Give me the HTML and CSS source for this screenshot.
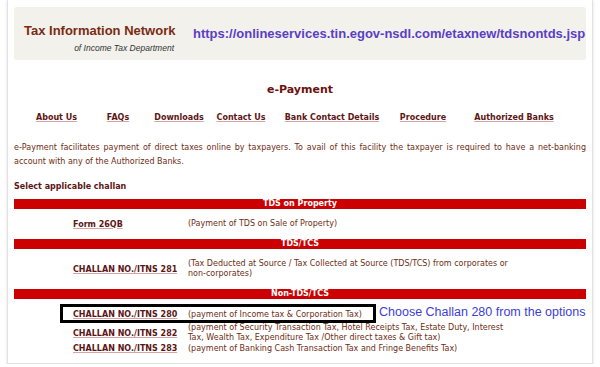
FILE: index.html
```html
<!DOCTYPE html>
<html>
    <head>
        <title>e-Payment</title>
        <meta name="viewport" content="width=device-width, initial-scale=1.0">
        <link rel="stylesheet" href="styles.css">
    </head>
<body>
    <div class='page'>
        <div class='header'>
            <div class='brand'>
                <div class='brand-title'>Tax Information Network</div>
                <div class='brand-sub'>of Income Tax Department</div>
            </div>
            <div class='url'>https://onlineservices.tin.egov-nsdl.com/etaxnew/tdsnontds.jsp</div>
        </div>

        <h1 class='title'>e-Payment</h1>

        <div class='nav'>
            <a href='#'>About Us</a>
            <a href='#'>FAQs</a>
            <a href='#'>Downloads</a>
            <a href='#'>Contact Us</a>
            <a href='#'>Bank Contact Details</a>
            <a href='#'>Procedure</a>
            <a href='#'>Authorized Banks</a>
        </div>

        <p class='intro'>e-Payment facilitates payment of direct taxes online by taxpayers. To avail of this facility the taxpayer is required to have a net-banking account with any of the Authorized Banks.</p>

        <div class='select-label'>Select applicable challan</div>

        <div class='bar first-bar'>TDS on Property</div>
        <div class='challan-row row-single'>
            <a href='#'>Form 26QB</a>
            <span>(Payment of TDS on Sale of Property)</span>
        </div>

        <div class='bar'>TDS/TCS</div>
        <div class='challan-row row-tall'>
            <a href='#'>CHALLAN NO./ITNS 281</a>
            <span>(Tax Deducted at Source / Tax Collected at Source (TDS/TCS) from corporates or non-corporates)</span>
        </div>

        <div class='bar'>Non-TDS/TCS</div>
        <div class='non-tds'>
            <div class='challan-row row-tight'>
                <a href='#'>CHALLAN NO./ITNS 280</a>
                <span>(payment of Income tax &amp; Corporation Tax)</span>
            </div>
            <div class='challan-row row-tight'>
                <a href='#'>CHALLAN NO./ITNS 282</a>
                <span>(payment of Security Transaction Tax, Hotel Receipts Tax, Estate Duty, Interest Tax, Wealth Tax, Expenditure Tax /Other direct taxes &amp; Gift tax)</span>
            </div>
            <div class='challan-row row-tight'>
                <a href='#'>CHALLAN NO./ITNS 283</a>
                <span>(payment of Banking Cash Transaction Tax and Fringe Benefits Tax)</span>
            </div>
            <div class='highlight'></div>
            <div class='hint'>Choose Challan 280 from the options</div>
        </div>
    </div>
</body>
</html>
```

FILE: styles.css
```css
html {
    font-family: 'DejaVu Sans', Verdana, sans-serif;
}
body {
    margin: 0;
    background: #ffffff;
}
a {
    color: #5c1616;
    font-weight: bold;
    text-decoration: underline;
    text-decoration-color: #d9a3a3;
    text-decoration-thickness: 1px;
    text-underline-offset: 1px;
}
.page {
    margin-left: 7px;
    width: 572px;
    height: 356px;
    padding: 7px 6px 0 6px;
    border: 1px solid #e2e2e2;
    border-top: 0;
    box-shadow: 0 1px 3px rgba(0,0,0,0.12);
    color: #6e2d14;
    font-size: 8px;
}
.header {
    display: flex;
    align-items: center;
    height: 53px;
    background: #f2f1eb;
    border-radius: 3px;
}
.brand {
    flex-shrink: 0;
    width: 160px;
    padding-left: 10px;
    padding-top: 8px;
    font-family: 'Liberation Sans', Arial, sans-serif;
    white-space: nowrap;
}
.brand-title {
    color: #7a2b12;
    font-weight: bold;
    font-size: 13px;
    line-height: 16px;
}
.brand-sub {
    color: #333;
    font-style: italic;
    font-size: 8.5px;
    text-align: right;
    padding-right: 10px;
    margin-top: 4px;
}
.url {
    margin-left: 9px;
    color: #5a3ec8;
    font-family: 'Liberation Sans', Arial, sans-serif;
    font-weight: bold;
    font-size: 13px;
    white-space: nowrap;
}
.title {
    margin: 22px 0 0 0;
    text-align: center;
    color: #6d1010;
    font-size: 11px;
    line-height: 16px;
}
.nav {
    display: grid;
    grid-template-columns: 63px 60px 62px 62px 120px 62px 120px;
    margin: 14px 0 0 11px;
    line-height: 12px;
}
.nav a {
    text-align: center;
    white-space: nowrap;
}
.intro {
    margin: 17px 0 0 0;
    line-height: 14px;
    text-align: justify;
}
.select-label {
    margin-top: 12px;
    font-weight: bold;
    color: #5c1616;
    line-height: 12px;
}
.bar {
    background: #cc0000;
    color: #fff;
    font-weight: bold;
    text-align: center;
    line-height: 10px;
    height: 10px;
}
.first-bar {
    margin-top: 6px;
}
.challan-row {
    display: grid;
    grid-template-columns: 115px 330px;
    align-items: center;
    padding-left: 59px;
}
.challan-row span {
    line-height: 10px;
}
.row-single {
    height: 30px;
}
.row-tall {
    height: 40px;
}
.non-tds {
    position: relative;
    padding-top: 7px;
}
.row-tight {
    height: 17px;
}
.highlight {
    position: absolute;
    left: 46px;
    top: 5px;
    width: 310px;
    height: 13px;
    border: 3px solid #000;
}
.hint {
    position: absolute;
    left: 365px;
    top: 6px;
    color: #3d3dd6;
    font-family: 'Liberation Sans', Arial, sans-serif;
    font-size: 12.5px;
    white-space: nowrap;
}
```
